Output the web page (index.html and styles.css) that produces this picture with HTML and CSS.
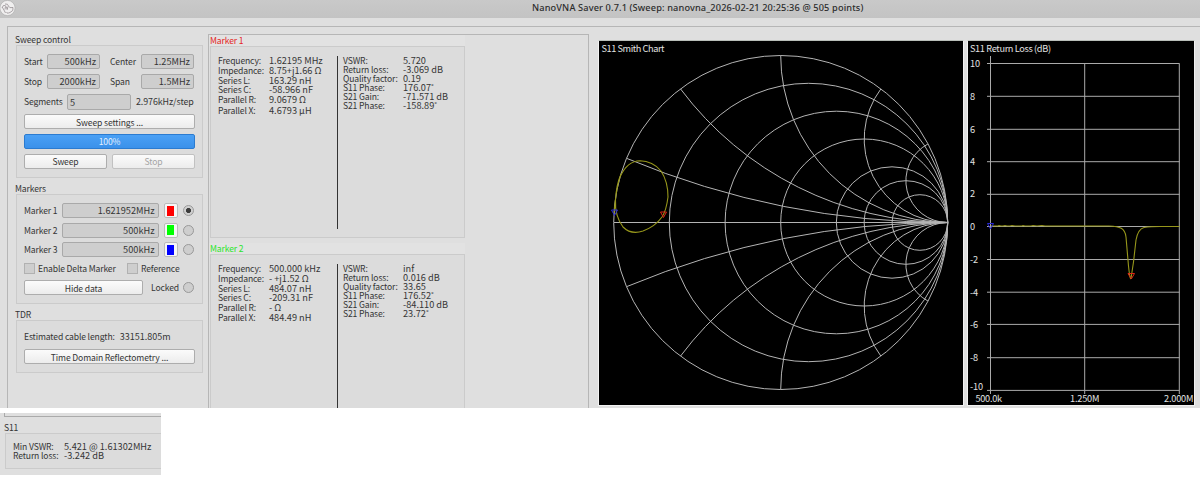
FILE: index.html
```html
<!DOCTYPE html>
<html lang="en">
<head>
<meta charset="utf-8">
<title>NanoVNA Saver</title>
<link rel="stylesheet" href="styles.css">
</head>
<body>
<div class="window">
  <header class="titlebar">
    <svg class="logo" width="16" height="17" viewBox="0 0 16 17">
      <circle cx="7.5" cy="8" r="7.6" fill="#f0efef" stroke="#aaa" stroke-width=".6"/>
      <path d="M2 8Q3 4.500 5 5.500T7 9M2.500 7.500Q4 10 5.500 13M5 4Q8 3.500 8.500 6T13 7.500M5.500 6.500L5 9.500M8 6.500L7 10M13 7.500Q14 11 10 12.500T7 12" fill="none" stroke="#8b8488" stroke-width=".7"/>
    </svg>
    <h1 class="title">NanoVNA Saver 0.7.1 (Sweep: nanovna_2026-02-21 20:25:36 @ 505 points)</h1>
  </header>
  <main class="main">
    <section class="controls">
      <h2 class="group-title">Sweep control</h2>
      <div class="group sweep">
        <div class="range">
          <div class="pair"><span>Start</span><span class="field">500kHz</span><span>Stop</span><span class="field">2000kHz</span></div>
          <div class="divider"></div>
          <div class="pair pair-right"><span>Center</span><span class="field">1.25MHz</span><span>Span</span><span class="field">1.5MHz</span></div>
        </div>
        <div class="row segments"><span class="seg-label">Segments</span><span class="field seg-field">5</span><span class="step">2.976kHz/step</span></div>
        <button class="btn">Sweep settings ...</button>
        <div class="progress">100%</div>
        <div class="row actions"><button class="btn">Sweep</button><button class="btn disabled">Stop</button></div>
      </div>
      <h2 class="group-title">Markers</h2>
      <div class="group markers">
        <div class="row marker"><span class="marker-label">Marker 1</span><span class="field">1.621952MHz</span><span class="swatch red"></span><span class="radio on"></span></div>
        <div class="row marker"><span class="marker-label">Marker 2</span><span class="field">500kHz</span><span class="swatch green"></span><span class="radio"></span></div>
        <div class="row marker"><span class="marker-label">Marker 3</span><span class="field">500kHz</span><span class="swatch blue"></span><span class="radio"></span></div>
        <div class="row checks"><span class="box"></span><span class="delta">Enable Delta Marker</span><span class="box"></span><span>Reference</span></div>
        <div class="row hide"><button class="btn">Hide data</button><span class="locked">Locked</span><span class="radio"></span></div>
      </div>
      <h2 class="group-title">TDR</h2>
      <div class="group tdr">
        <div class="length"><span>Estimated cable length:</span><span class="num">33151.805m</span></div>
        <button class="btn">Time Domain Reflectometry ...</button>
      </div>
    </section>
    <section class="data">
      <h2 class="data-title t-red">Marker 1</h2>
      <div class="data-box first">
        <div class="values left v1"><span>Frequency:</span><span>1.62195 MHz</span><span>Impedance:</span><span>8.75+j1.66 Ω</span><span>Series L:</span><span>163.29 nH</span><span>Series C:</span><span>-58.966 nF</span><span>Parallel R:</span><span>9.0679 Ω</span><span>Parallel X:</span><span>4.6793 µH</span></div>
        <div class="values right"><span>VSWR:</span><span>5.720</span><span>Return loss:</span><span>-3.069 dB</span><span>Quality factor:</span><span>0.19</span><span>S11 Phase:</span><span>176.07˚</span><span>S21 Gain:</span><span>-71.571 dB</span><span>S21 Phase:</span><span>-158.89˚</span></div>
      </div>
      <h2 class="data-title t-green">Marker 2</h2>
      <div class="data-box second">
        <div class="values left v2"><span>Frequency:</span><span>500.000 kHz</span><span>Impedance:</span><span>- +j1.52 Ω</span><span>Series L:</span><span>484.07 nH</span><span>Series C:</span><span>-209.31 nF</span><span>Parallel R:</span><span>- Ω</span><span>Parallel X:</span><span>484.49 nH</span></div>
        <div class="values right"><span>VSWR:</span><span>inf</span><span>Return loss:</span><span>0.016 dB</span><span>Quality factor:</span><span>33.65</span><span>S11 Phase:</span><span>176.52˚</span><span>S21 Gain:</span><span>-84.110 dB</span><span>S21 Phase:</span><span>23.72˚</span></div>
      </div>
    </section>
    <section class="charts">
      <svg class="chart" width="364" height="364" viewBox="599 41 364 364">
        <g class="grid">
          <circle cx="780.700" cy="222.500" r="167"/>
          <circle cx="808.500" cy="222.500" r="139.200"/>
          <circle cx="836.400" cy="222.500" r="111.300"/>
          <circle cx="864.200" cy="222.500" r="83.500"/>
          <circle cx="892" cy="222.500" r="55.700"/>
          <circle cx="905.900" cy="222.500" r="41.800"/>
          <circle cx="919.900" cy="222.500" r="27.800"/>
          <path d="M614 222.500H947.700"/>
          <path d="M626.500 158.300A835 835 0 0 0 947.700 222.500M626.500 286.700A835 835 0 0 1 947.700 222.500"/>
          <path d="M680.500 88.900A334 334 0 0 0 947.700 222.500M680.500 356.100A334 334 0 0 1 947.700 222.500"/>
          <path d="M780.700 55.500A167 167 0 0 0 947.700 222.500M780.700 389.500A167 167 0 0 1 947.700 222.500"/>
          <path d="M880.900 88.900A83.500 83.500 0 0 0 947.700 222.500M880.900 356.100A83.500 83.500 0 0 1 947.700 222.500"/>
          <path d="M928 143.900A41.750 41.750 0 0 0 947.700 222.500M928 301.100A41.750 41.750 0 0 1 947.700 222.500"/>
        </g>
        <path class="trace" d="M614 214C615 202 616 188 620 177C625 166 631 161 640 160.800C650 161 656 165 661 171C667 180 668 189 668 197C667 205 666 211 662 217C657 224 651 228 643 231C634 234 628 232 623 227C617 219 615 210 615.500 200C616 190 618 181 621 174"/>
        <path class="mark-red" d="M660.500 212H666.500L663.500 217.500Z"/>
        <path class="mark-blue" d="M611.500 210H617.500L614.500 215.500Z"/>
        <text x="601.500" y="52" textLength="63">S11 Smith Chart</text>
      </svg>
      <svg class="chart" width="226" height="364" viewBox="968 41 226 364">
        <g class="lines">
          <path d="M987 63.500H1179.500M987 96.300H1179.500M987 129.300H1179.500M987 161.700H1179.500M987 194.300H1179.500M987 226.500H1179.500M987 259.500H1179.500M987 292.200H1179.500M987 324.400H1179.500M987 357.700H1179.500M987 390.400H1179.500"/>
          <path d="M990.500 56V394M1084.700 63.500V394M1179.300 63.500V394"/>
        </g>
        <path class="trace" d="M991 226H998l1-.5 2 .5h2l2-.5 2 .5h3l2-.5 3 .5h7l1-.5 2 .5h6l2-.5 4 .5 5-.5 3 .5h9H1109C1120 226.500 1125 228 1126 237L1128.500 266Q1130 280 1131 278.500L1133.500 262L1136 240Q1138 229 1144 227.500Q1150 226.500 1160 226.500H1179.500"/>
        <path class="mark-red" d="M1128 273.500H1134.500L1131.300 279Z"/>
        <path class="mark-blue" d="M987.500 223.500H993.500L990.500 229Z"/>
        <text x="970" y="52" textLength="81">S11 Return Loss (dB)</text>
        <text x="970" y="66.700" textLength="10">10</text>
        <text x="970" y="99.500">8</text>
        <text x="970" y="132.500">6</text>
        <text x="970" y="164.800">4</text>
        <text x="970" y="197">2</text>
        <text x="970" y="229.800">0</text>
        <text x="970" y="262.800" textLength="8">-2</text>
        <text x="970" y="295.500" textLength="8">-4</text>
        <text x="970" y="327.800" textLength="8">-6</text>
        <text x="970" y="361" textLength="8">-8</text>
        <text x="970" y="390.300" textLength="13">-10</text>
        <text x="975.500" y="401.500" textLength="26.500">500.0k</text>
        <text x="1070" y="401.500" textLength="29.500">1.250M</text>
        <text x="1164" y="401.500" textLength="29.500">2.000M</text>
      </svg>
    </section>
  </main>
</div>
<aside class="summary">
  <div class="summary-edge"></div>
  <h2 class="summary-title">S11</h2>
  <div class="summary-box"><span>Min VSWR:</span><span>5.421 @ 1.61302MHz</span><span>Return loss:</span><span>-3.242 dB</span></div>
</aside>
</body>
</html>
```
FILE: styles.css
```css
* { box-sizing: border-box; }
body {
  margin: 0;
  width: 1200px;
  height: 488px;
  overflow: hidden;
  background: #fff;
  color: #353535;
  font: 8.600px/9px "Noto Sans CJK JP", "Noto Sans", sans-serif;
  letter-spacing: -.14px;
  white-space: nowrap;
}
h1, h2 { margin: 0; font: inherit; }
.window { width: 1200px; height: 408px; overflow: hidden; background: #dfdfdf; }
.titlebar { display: flex; height: 18px; background: linear-gradient(#c9c9c9, #c3c3c3); }
.logo { flex: none; }
.title { margin-left: 516px; letter-spacing: .14px; color: #2c2c2c; font: 500 9.200px/16px "Noto Sans", sans-serif; }
.main {
  display: flex;
  align-items: flex-start;
  height: 382px;
  margin: 8px 0 0 7px;
  border-top: 1px solid #b6b6b6;
  border-left: 1px solid #b6b6b6;
}
.controls { width: 188px; margin: 7px 5px 0 7px; flex: none; }
.group-title { height: 11px; line-height: 11px; }
.group { border: 1px solid #cbcbcb; background: #dcdcdc; padding: 8px 8px 0 7px; margin-left: 1px; width: 187px; }
.sweep { height: 133px; margin-bottom: 5px; display: flex; flex-direction: column; gap: 4.700px; }
.range { display: flex; height: 35px; }
.pair { display: grid; grid-template-columns: 23px 53px; grid-template-rows: 15px 15px; row-gap: 5px; line-height: 15px; }
.pair-right { grid-template-columns: 31px 53px; }
.divider { width: 1px; background: #666; margin: 0 5px; }
.field { height: 15px; padding: 0 3px; border: 1px solid #a9a9a9; border-radius: 2px; background: #cecece; text-align: right; font-size: 9.200px; line-height: 13px; letter-spacing: 0; flex: none; }
.row { display: flex; align-items: center; flex: none; }
.segments { height: 16px; }
.seg-label { width: 43px; }
.seg-field { width: 64px; height: 16px; line-height: 14px; margin-right: 5px; text-align: left; padding-left: 2px; }
.step { font-size: 8.900px; letter-spacing: -.08px; }
.btn { display: block; width: 171px; height: 15px; padding: 0; border: 1px solid #adadad; border-radius: 2px; background: linear-gradient(#fbfbfb, #ececec); color: #353535; font: inherit; letter-spacing: inherit; line-height: 12px; flex: none; }
.btn.disabled { color: #a4a4a4; border-color: #c1c1c1; }
.progress { height: 15px; width: 171px; border: 1px solid #2b7bd0; border-radius: 2px; background: linear-gradient(#4aa0f5, #3b91ea); color: #e4f1ff; text-align: center; line-height: 13px; flex: none; }
.actions { gap: 5px; }
.actions .btn { width: 83px; }
.markers { height: 110px; margin-bottom: 5px; }
.marker { height: 15px; margin-bottom: 4.600px; }
.marker-label { width: 39px; }
.marker .field { width: 97px; margin-right: 5px; }
.swatch { width: 15px; height: 15px; border: 1px solid #bbb; border-radius: 2px; margin-right: 5px; }
.red { background: linear-gradient(#f00, #f00) center / 7px 10px no-repeat #f6f6f6; }
.green { background: linear-gradient(#0f0, #0f0) center / 7px 10px no-repeat #f6f6f6; }
.blue { background: linear-gradient(#00f, #00f) center / 7px 10px no-repeat #f6f6f6; }
.radio { width: 11px; height: 11px; border: 1px solid #999; border-radius: 50%; background: #cecece; flex: none; }
.radio.on { background: radial-gradient(circle, #3c3c3c 0 2.200px, #d0d0d0 2.900px); }
.checks { height: 11px; margin-top: 6px; }
.box { width: 11px; height: 11px; border: 1px solid #b1b1b1; background: #cecece; margin-right: 3px; flex: none; }
.delta { width: 89px; }
.hide { height: 15px; margin-top: 6px; }
.hide .btn { width: 119px; }
.locked { width: 38px; margin-left: 8px; }
.tdr { height: 53px; }
.length { display: flex; gap: 5px; height: 20px; line-height: 15px; }
.num { font-size: 9px; letter-spacing: 0; }
.data { width: 381px; height: 380px; margin-top: 7px; border: 1px solid #b6b6b6; border-bottom: 0; flex: none; }
.data-title { height: 11px; line-height: 11px; padding-left: 1px; width: 256px; background: #e2e2e2; }
.t-red { color: #e52525; }
.t-green { color: #2be52b; }
.data-box { display: flex; width: 255px; margin-left: 1px; padding: 9px 8px 8px 7px; border: 1px solid #cbcbcb; background: #dcdcdc; }
.first { height: 192px; margin-bottom: 5px; }
.second { height: 164px; }
.values { display: grid; align-content: start; line-height: 8px; }
.values span:nth-child(even), .summary-box span:nth-child(even) { font-size: 9.200px; letter-spacing: 0; }
.left { width: 120px; grid-template-columns: 51px 69px; border-right: 1px solid #333; }
.v1 { grid-template-rows: 10px 10px 9px 10px 11px 10px; }
.v2 { grid-template-rows: 10px 10px 9px 10px 10px 10px; }
.right { grid-template-columns: 60px 60px; grid-template-rows: repeat(6, 9px); padding-left: 5px; }
.charts { display: flex; gap: 3px; margin: 13px 0 0 9px; flex: none; }
.chart { display: block; border: 1px solid #f2f2f2; border-top-color: #b9beb9; box-sizing: content-box; background: #000; letter-spacing: 0; }
.chart text { font: 9.200px "Noto Sans CJK JP", "Noto Sans", sans-serif; fill: #e2e2e2; }
.grid { fill: none; stroke: #b4b4b4; stroke-width: 1; }
.lines { fill: none; stroke: #aaa; stroke-width: 1; }
.trace { fill: none; stroke: #97971b; stroke-width: 1.100; }
.mark-red { fill: none; stroke: #df2716; }
.mark-blue { fill: none; stroke: #2929d8; }
.summary { width: 161px; height: 62px; margin-top: 5px; background: #dfdfdf; overflow: hidden; }
.summary-edge { height: 4px; margin-left: 4px; border-left: 1px solid #aaa; border-bottom: 1px solid #aaa; }
.summary-title { margin-left: 4px; height: 16px; line-height: 20px; }
.summary-box { display: grid; grid-template-columns: 51px 100px; grid-template-rows: 9px 9px; width: 160px; height: 36px; margin-left: 5px; padding: 8px 7px; border: 1px solid #cbcbcb; background: #dcdcdc; }
```
